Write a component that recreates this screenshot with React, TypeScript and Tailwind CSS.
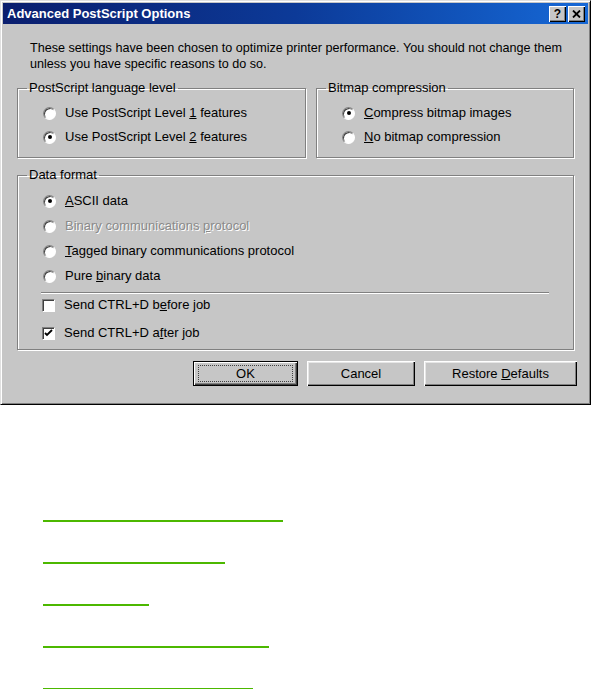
import type { ReactNode } from 'react'

const FONT = { fontFamily: '"Liberation Sans", Arial, sans-serif' }

function Radio({ checked = false, disabled = false, children }: { checked?: boolean; disabled?: boolean; children: ReactNode }) {
  return (
    <div className="flex h-[16px] items-center gap-[9px]">
      <span className="relative flex size-[13px] shrink-0 items-center justify-center rounded-full border border-t-[#808080] border-l-[#808080] border-r-white border-b-white bg-white shadow-[inset_1px_1px_0_#404040]">
        {checked ? <span className="size-[4px] rounded-full bg-black" /> : null}
      </span>
      <span className={disabled ? 'text-[#8a8a8a] [text-shadow:1px_1px_0_#fff]' : 'text-black'}>{children}</span>
    </div>
  )
}

function Check({ checked = false, children }: { checked?: boolean; children: ReactNode }) {
  return (
    <div className="flex h-[16px] items-center gap-[9px]">
      <span className="flex size-[13px] shrink-0 items-center justify-center border border-t-[#808080] border-l-[#808080] border-r-white border-b-white bg-white shadow-[inset_1px_1px_0_#404040]">
        {checked ? (
          <svg width="9" height="9" viewBox="0 0 9 9">
            <path d="M1 4 L3 6 L8 1" stroke="#000" strokeWidth="1.8" fill="none" />
          </svg>
        ) : null}
      </span>
      <span>{children}</span>
    </div>
  )
}

function Group({ title, className = '', children }: { title: string; className?: string; children: ReactNode }) {
  return (
    <fieldset className={`border border-[#808080] shadow-[inset_1px_1px_0_#fff,1px_1px_0_#fff] ${className}`}>
      <legend className="ml-[9px] px-[2px] leading-[16px]">{title}</legend>
      {children}
    </fieldset>
  )
}

function Btn({ w, focus = false, children }: { w: string; focus?: boolean; children: ReactNode }) {
  return (
    <div
      className={`flex h-[25px] items-center justify-center bg-[#c6c6c6] ${w} ${
        focus
          ? 'border border-black shadow-[inset_1px_1px_0_#fff,inset_-1px_-1px_0_#404040,inset_-2px_-2px_0_#808080]'
          : 'shadow-[inset_1px_1px_0_#fff,inset_-1px_-1px_0_#000,inset_-2px_-2px_0_#808080,inset_2px_2px_0_#e6e6e6]'
      }`}
    >
      {focus ? (
        <span className="flex h-[17px] w-[calc(100%-8px)] items-center justify-center border border-dotted border-[#404040]">
          {children}
        </span>
      ) : (
        <span>{children}</span>
      )}
    </div>
  )
}

export default function App() {
  return (
    <div className="min-h-[689px] bg-white text-[13px] text-black" style={FONT}>
      <div className="w-[591px] border border-t-[#e0e0e0] border-l-[#e0e0e0] border-r-[#000] border-b-[#000] bg-[#c6c6c6] p-[2px] shadow-[inset_1px_1px_0_#fff,inset_-1px_-1px_0_#808080]">
        {/* Title bar */}
        <div className="flex h-[21px] items-center justify-between bg-gradient-to-r from-[#0a1e6e] via-[#0c3a98] to-[#1668d6] pl-[4px] pr-[3px]">
          <span className="text-[13px] font-bold text-white">Advanced PostScript Options</span>
          <div className="flex gap-[2px]">
            <span className="flex h-[16px] w-[17px] items-center justify-center bg-[#c6c6c6] text-[12px] font-bold leading-none shadow-[inset_1px_1px_0_#fff,inset_-1px_-1px_0_#000,inset_-2px_-2px_0_#808080]">
              ?
            </span>
            <span className="flex h-[16px] w-[17px] items-center justify-center bg-[#c6c6c6] shadow-[inset_1px_1px_0_#fff,inset_-1px_-1px_0_#000,inset_-2px_-2px_0_#808080]">
              <svg width="9" height="8" viewBox="0 0 9 8">
                <path d="M1 0.5 L8 7.5 M8 0.5 L1 7.5" stroke="#000" strokeWidth="1.8" />
              </svg>
            </span>
          </div>
        </div>

        {/* Content */}
        <div className="px-[14px] pt-[16px] pb-[16px]">
          <p className="whitespace-nowrap pl-[13px] text-[12.6px] leading-[16px]">
            These settings have been chosen to optimize printer performance. You should not change them
            <br />
            unless you have specific reasons to do so.
          </p>

          <div className="mt-[8px] flex gap-[10px]">
            <Group title="PostScript language level" className="w-[289px]">
              <div className="flex flex-col gap-[8px] pt-[9px] pb-[12px] pl-[25px]">
                <Radio>
                  Use PostScript Level <u>1</u> features
                </Radio>
                <Radio checked>
                  Use PostScript Level <u>2</u> features
                </Radio>
              </div>
            </Group>
            <Group title="Bitmap compression" className="w-[258px]">
              <div className="flex flex-col gap-[8px] pt-[9px] pb-[12px] pl-[25px]">
                <Radio checked>
                  <u>C</u>ompress bitmap images
                </Radio>
                <Radio>
                  <u>N</u>o bitmap compression
                </Radio>
              </div>
            </Group>
          </div>

          <Group title="Data format" className="mt-[9px] w-[557px]">
            <div className="pt-[10px] pb-[8px] pl-[25px]">
              <div className="flex flex-col gap-[9px]">
                <Radio checked>
                  <u>A</u>SCII data
                </Radio>
                <Radio disabled>
                  Binary communications <u>p</u>rotocol
                </Radio>
                <Radio>
                  <u>T</u>agged binary communications protocol
                </Radio>
                <Radio>
                  Pure <u>b</u>inary data
                </Radio>
              </div>
              <div className="mt-[8px] mr-[24px] -ml-[2px] h-[2px] border-t border-[#808080] border-b border-b-white" />
              <div className="-ml-[1px] mt-[3px] flex flex-col gap-[12px]">
                <Check>
                  Send CTRL+D b<u>e</u>fore job
                </Check>
                <Check checked>
                  Send CTRL+D a<u>f</u>ter job
                </Check>
              </div>
            </div>
          </Group>

          <div className="-mr-[3px] mt-[11px] flex justify-end gap-[9px]">
            <Btn w="w-[105px]" focus>
              OK
            </Btn>
            <Btn w="w-[108px]">Cancel</Btn>
            <Btn w="w-[153px]">
              Restore <u>D</u>efaults
            </Btn>
          </div>
        </div>
      </div>

      {/* Link underlines */}
      <div className="flex flex-col gap-[40px] pt-[115px] pl-[43px]">
        <div className="h-[2px] w-[240px] bg-[#4cb800]" />
        <div className="h-[2px] w-[182px] bg-[#4cb800]" />
        <div className="h-[2px] w-[106px] bg-[#4cb800]" />
        <div className="h-[2px] w-[226px] bg-[#4cb800]" />
        <div className="h-[2px] w-[210px] bg-[#4cb800]" />
      </div>
    </div>
  )
}
